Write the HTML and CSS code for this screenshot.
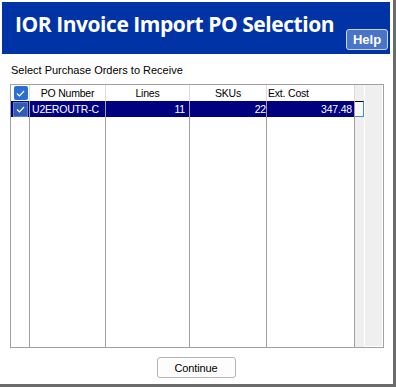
FILE: index.html
```html
<!DOCTYPE html>
<html>

<head>
    <title>IOR Invoice Import PO Selection</title>
<meta name="viewport" content="width=device-width, initial-scale=1">
<link rel="stylesheet" href="styles.css">
</head>

<body>

<div class="window">
  <div class="titlebar">
    <h1 class="title">IOR Invoice Import PO Selection</h1>
    <button class="help">Help</button>
  </div>

  <p class="prompt">Select Purchase Orders to Receive</p>

  <div class="grid">
    <!-- header row -->
    <div class="hd chk">
      <span class="box"><svg width="9" height="7" viewBox="0 0 9 7"><path d="M1 3.5 L3.5 6 L8 1" fill="none" stroke="#fff" stroke-width="1.2"/></svg></span>
    </div>
    <div class="hd center">PO Number</div>
    <div class="hd center">Lines</div>
    <div class="hd center">SKUs</div>
    <div class="hd">Ext. Cost</div>
    <div class="scroll"><div class="track"></div></div>

    <!-- selected row -->
    <div class="cell sel chk">
      <span class="box rowbox"><svg width="9" height="7" viewBox="0 0 9 7"><path d="M1 3.5 L3.5 6 L8 1" fill="none" stroke="#fff" stroke-width="1.2"/></svg></span>
    </div>
    <div class="cell sel">U2EROUTR-C</div>
    <div class="cell sel num lines">11</div>
    <div class="cell sel num skus">22</div>
    <div class="cell sel num">347.48</div>

    <!-- empty space below rows -->
    <div class="cell fill"></div>
    <div class="cell fill"></div>
    <div class="cell fill"></div>
    <div class="cell fill"></div>
    <div class="cell fill"></div>

    <div class="focus"></div>
  </div>

  <div class="actions">
    <button class="btn">Continue</button>
  </div>
</div>

</body>
</html>
```

FILE: styles.css
```css
* {
  box-sizing: border-box;
}

body {
  margin: 0;
  font-family: "Liberation Sans", Arial, sans-serif;
  font-size: 10.5px;
  letter-spacing: -0.2px;
  color: #000;
  background: #fff;
}

.window {
  width: 396px;
  height: 387px;
  padding: 2px 3px 0 2px;
  border-right: 3px solid #6b6b6b;
  border-bottom: 3px solid #6b6b6b;
  background: #fff;
}

/* blue banner */
.titlebar {
  height: 52px;
  background-color: #0033a6;
  display: flex;
  justify-content: space-between;
  align-items: flex-start;
  padding: 0 2px 0 13px;
}

.title {
  margin: 9px 0 0 0;
  font-family: "Open Sans", "Noto Sans", sans-serif;
  font-weight: bold;
  font-size: 21px;
  letter-spacing: -0.45px;
  line-height: 26px;
  color: #fff;
  white-space: nowrap;
}

.help {
  align-self: flex-end;
  flex-shrink: 0;
  margin-bottom: 4px;
  width: 42px;
  height: 21px;
  padding: 0;
  background-color: #4a74c8;
  border: 1px solid #c9d5f0;
  border-radius: 3px;
  color: #fff;
  font-family: "Liberation Sans", Arial, sans-serif;
  font-weight: bold;
  font-size: 13px;
  letter-spacing: 0;
}

.prompt {
  margin: 9px 0 7px 9px;
  line-height: 14px;
  font-size: 11px;
  letter-spacing: 0;
}

/* purchase order list */
.grid {
  position: relative;
  margin-left: 8px;
  width: 374px;
  height: 264px;
  border: 1px solid #a0a0a0;
  display: grid;
  grid-template-columns: 19px 76px 84px 77px 88px 28px;
  grid-template-rows: 16px 16px 1fr;
}

.hd {
  border-right: 1px solid #dcdcdc;
  line-height: 16px;
  padding-left: 1px;
  white-space: nowrap;
}

.center {
  text-align: center;
  padding-left: 0;
}

.chk {
  display: flex;
  align-items: center;
  justify-content: center;
}

.box {
  width: 14px;
  height: 14px;
  border-radius: 2px;
  background-color: #2a6fd2;
  display: flex;
  align-items: center;
  justify-content: center;
}

.rowbox {
  width: 15px;
  height: 15px;
  border-radius: 0;
  border: 1px solid #5b80d2;
  background-color: #2f5db6;
}

.cell {
  border-right: 1px solid #a0a0a0;
}

.sel {
  background-color: #000080;
  color: #fff;
  line-height: 16px;
  padding-left: 2px;
  white-space: nowrap;
}

.sel.chk {
  padding-left: 0;
}

.num {
  text-align: right;
  padding-right: 2px;
}

.lines {
  padding-right: 4px;
}

.skus {
  padding-right: 0;
}

.scroll {
  grid-column: 6;
  grid-row: 1 / 4;
  background-color: #efefef;
  padding-left: 9px;
}

.track {
  height: 100%;
  border-left: 1px solid #fff;
  border-right: 1px solid #fff;
  border-bottom: 1px solid #fff;
}

/* focus rectangle that sits past the last column */
.focus {
  position: absolute;
  left: 344px;
  top: 16px;
  width: 9px;
  height: 16px;
  background-color: #f7f7f7;
  border-top: 1px solid #000;
  border-right: 1px solid #3a8ae6;
  border-bottom: 1px solid #3a8ae6;
}

.actions {
  display: flex;
  justify-content: center;
  margin-top: 9px;
}

.btn {
  width: 79px;
  height: 21px;
  padding: 0;
  background-color: #fdfdfd;
  border: 1px solid #b4b4b4;
  border-radius: 3px;
  font-family: "Liberation Sans", Arial, sans-serif;
  font-size: 11px;
  letter-spacing: -0.1px;
  color: #000;
}
```
